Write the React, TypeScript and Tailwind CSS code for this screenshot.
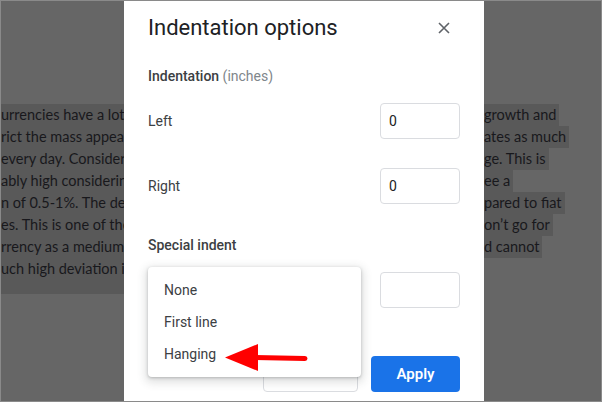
const lines: [string, string][] = [
  ['urrencies have a lot', 'growth and'],
  ['rict the mass appea', 'ates as much'],
  ['every day. Consider', 'ge. This is'],
  ['ably high considerin', 'ee a'],
  ['n of 0.5-1%. The dev', 'pared to fiat'],
  ['es. This is one of the', 'on’t go for'],
  ['rrency as a medium', 'd cannot'],
  ['uch high deviation i', ''],
];

export default function App() {
  return (
    <div className="relative h-[402px] w-[602px] overflow-hidden border border-[#8a8a8a] bg-[#666666]">
      {/* selected document text behind the overlay */}
      <div className="pt-[103px] font-['Lato',sans-serif] text-[14.5px] leading-[22px] text-[#18181c]">
        {lines.map(([left, right], i) => (
          <div key={i} className="flex h-[22px]">
            <div className="w-[123px] shrink-0 overflow-hidden whitespace-nowrap bg-[#595959]">{left}</div>
            <div className="w-[360px] shrink-0 bg-[#595959]" />
            {right && <div className="whitespace-nowrap bg-[#595959] pr-[3px]">{right}</div>}
          </div>
        ))}
        <div className="h-[14px] w-[200px] bg-[#595959]" />
      </div>

      {/* dialog */}
      <div className="absolute left-[123px] top-0 h-[400px] w-[360px] bg-white px-6 pt-[13px] font-['Roboto',sans-serif]">
        <div className="flex h-[28px] items-center justify-between">
          <h2 className="text-[22px] leading-[28px] text-[#202124]">Indentation options</h2>
          <button className="mr-1 flex h-6 w-6 items-center justify-center">
            <svg width="12" height="12" viewBox="0 0 12 12">
              <path d="M1 1L11 11M11 1L1 11" stroke="#5f6368" strokeWidth="1.6" />
            </svg>
          </button>
        </div>

        <div className="mt-[24px] text-[14px] leading-5">
          <span className="font-medium text-[#3c4043]">Indentation</span>{' '}
          <span className="text-[#80868b]">(inches)</span>
        </div>

        <div className="mt-[17px] flex h-[36px] items-center justify-between">
          <span className="text-[14px] text-[#3c4043]">Left</span>
          <div className="flex h-[36px] w-[80px] items-center rounded-[4px] border border-[#dadce0] pl-[8px] text-[14px] text-[#202124]">0</div>
        </div>

        <div className="mt-[29px] flex h-[36px] items-center justify-between">
          <span className="text-[14px] text-[#3c4043]">Right</span>
          <div className="flex h-[36px] w-[80px] items-center rounded-[4px] border border-[#dadce0] pl-[8px] text-[14px] text-[#202124]">0</div>
        </div>

        <div className="mt-[31px] text-[14px] font-medium leading-5 text-[#3c4043]">Special indent</div>

        <div className="mt-[17px] flex h-[36px] items-center justify-between">
          <div className="h-[36px] w-[150px] rounded-[4px] border border-[#dadce0]" />
          <div className="h-[36px] w-[80px] rounded-[4px] border border-[#dadce0]" />
        </div>

        <div className="mt-[48px] flex justify-end gap-[13px]">
          <button className="h-[36px] w-[95px] rounded-[4px] border border-[#dadce0]" />
          <button className="h-[36px] w-[89px] rounded-[4px] bg-[#1a73e8] text-[15px] font-semibold text-white">Apply</button>
        </div>

        {/* open dropdown menu */}
        <div className="absolute left-6 top-[266px] w-[213px] rounded-[4px] bg-white py-[7px] shadow-[0_1px_3px_rgba(60,64,67,0.3),0_3px_8px_3px_rgba(60,64,67,0.15)]">
          {['None', 'First line', 'Hanging'].map((item) => (
            <div key={item} className="flex h-8 items-center pl-4 text-[14px] text-[#3c4043]">{item}</div>
          ))}
        </div>
      </div>

      {/* red annotation arrow */}
      <svg className="absolute left-[220px] top-[340px]" width="92" height="34" viewBox="0 0 92 34">
        <polygon points="4,16.5 37,3 37,30" fill="#ff0000" />
        <line x1="34" y1="16.5" x2="84" y2="17.5" stroke="#ff0000" strokeWidth="5" strokeLinecap="round" />
      </svg>
    </div>
  );
}
